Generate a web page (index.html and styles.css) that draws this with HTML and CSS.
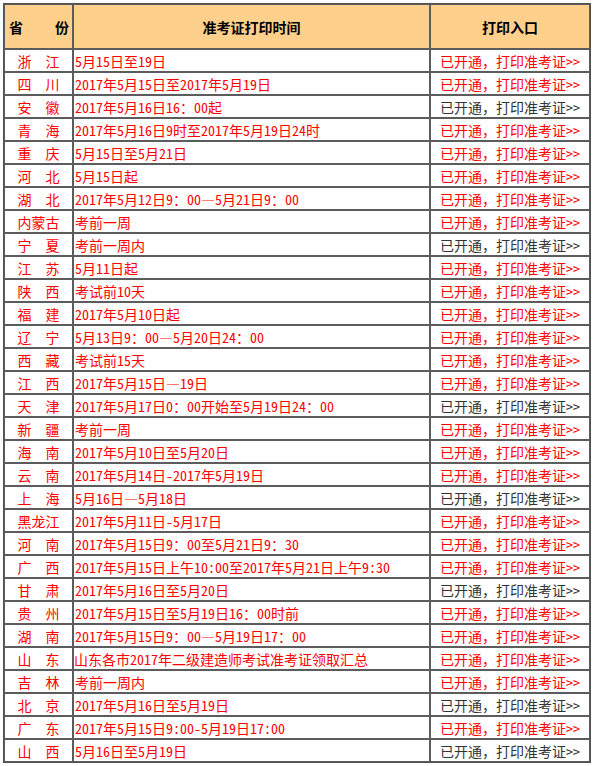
FILE: index.html
```html
<!DOCTYPE html>
<html lang="zh-CN">
<head>
<meta charset="utf-8">
<title>准考证打印时间</title>
<link rel="stylesheet" href="styles.css">
</head>
<body>
<table class="sched">
  <thead>
    <tr class="head-row">
      <th class="c-prov"><span class="prov-head"><span>省</span><span>份</span></span></th>
      <th class="c-time">准考证打印时间</th>
      <th class="c-link">打印入口</th>
    </tr>
  </thead>
  <tbody>
    <tr><td class="c-prov">浙　江</td><td class="c-time">5月15日至19日</td><td class="c-link red">已开通，打印准考证<span class="arr">&gt;&gt;</span></td></tr>
    <tr><td class="c-prov">四　川</td><td class="c-time">2017年5月15日至2017年5月19日</td><td class="c-link red">已开通，打印准考证<span class="arr">&gt;&gt;</span></td></tr>
    <tr><td class="c-prov">安　徽</td><td class="c-time">2017年5月16日16：00起</td><td class="c-link gray">已开通，打印准考证<span class="arr">&gt;&gt;</span></td></tr>
    <tr><td class="c-prov">青　海</td><td class="c-time">2017年5月16日9时至2017年5月19日24时</td><td class="c-link red">已开通，打印准考证<span class="arr">&gt;&gt;</span></td></tr>
    <tr><td class="c-prov">重　庆</td><td class="c-time">5月15日至5月21日</td><td class="c-link red">已开通，打印准考证<span class="arr">&gt;&gt;</span></td></tr>
    <tr><td class="c-prov">河　北</td><td class="c-time">5月15日起</td><td class="c-link red">已开通，打印准考证<span class="arr">&gt;&gt;</span></td></tr>
    <tr><td class="c-prov">湖　北</td><td class="c-time">2017年5月12日9：00—5月21日9：00</td><td class="c-link red">已开通，打印准考证<span class="arr">&gt;&gt;</span></td></tr>
    <tr><td class="c-prov">内蒙古</td><td class="c-time">考前一周</td><td class="c-link red">已开通，打印准考证<span class="arr">&gt;&gt;</span></td></tr>
    <tr><td class="c-prov">宁　夏</td><td class="c-time">考前一周内</td><td class="c-link gray">已开通，打印准考证<span class="arr">&gt;&gt;</span></td></tr>
    <tr><td class="c-prov">江　苏</td><td class="c-time">5月11日起</td><td class="c-link red">已开通，打印准考证<span class="arr">&gt;&gt;</span></td></tr>
    <tr><td class="c-prov">陕　西</td><td class="c-time">考试前10天</td><td class="c-link red">已开通，打印准考证<span class="arr">&gt;&gt;</span></td></tr>
    <tr><td class="c-prov">福　建</td><td class="c-time">2017年5月10日起</td><td class="c-link red">已开通，打印准考证<span class="arr">&gt;&gt;</span></td></tr>
    <tr><td class="c-prov">辽　宁</td><td class="c-time">5月13日9：00—5月20日24：00</td><td class="c-link red">已开通，打印准考证<span class="arr">&gt;&gt;</span></td></tr>
    <tr><td class="c-prov">西　藏</td><td class="c-time">考试前15天</td><td class="c-link red">已开通，打印准考证<span class="arr">&gt;&gt;</span></td></tr>
    <tr><td class="c-prov">江　西</td><td class="c-time">2017年5月15日—19日</td><td class="c-link red">已开通，打印准考证<span class="arr">&gt;&gt;</span></td></tr>
    <tr><td class="c-prov">天　津</td><td class="c-time">2017年5月17日0：00开始至5月19日24：00</td><td class="c-link gray">已开通，打印准考证<span class="arr">&gt;&gt;</span></td></tr>
    <tr><td class="c-prov">新　疆</td><td class="c-time">考前一周</td><td class="c-link red">已开通，打印准考证<span class="arr">&gt;&gt;</span></td></tr>
    <tr><td class="c-prov">海　南</td><td class="c-time">2017年5月10日至5月20日</td><td class="c-link red">已开通，打印准考证<span class="arr">&gt;&gt;</span></td></tr>
    <tr><td class="c-prov">云　南</td><td class="c-time">2017年5月14日-2017年5月19日</td><td class="c-link red">已开通，打印准考证<span class="arr">&gt;&gt;</span></td></tr>
    <tr><td class="c-prov">上　海</td><td class="c-time">5月16日—5月18日</td><td class="c-link gray">已开通，打印准考证<span class="arr">&gt;&gt;</span></td></tr>
    <tr><td class="c-prov">黑龙江</td><td class="c-time">2017年5月11日-5月17日</td><td class="c-link red">已开通，打印准考证<span class="arr">&gt;&gt;</span></td></tr>
    <tr><td class="c-prov">河　南</td><td class="c-time">2017年5月15日9：00至5月21日9：30</td><td class="c-link red">已开通，打印准考证<span class="arr">&gt;&gt;</span></td></tr>
    <tr><td class="c-prov">广　西</td><td class="c-time">2017年5月15日上午10:00至2017年5月21日上午9:30</td><td class="c-link red">已开通，打印准考证<span class="arr">&gt;&gt;</span></td></tr>
    <tr><td class="c-prov">甘　肃</td><td class="c-time">2017年5月16日至5月20日</td><td class="c-link gray">已开通，打印准考证<span class="arr">&gt;&gt;</span></td></tr>
    <tr><td class="c-prov">贵　州</td><td class="c-time">2017年5月15日至5月19日16：00时前</td><td class="c-link red">已开通，打印准考证<span class="arr">&gt;&gt;</span></td></tr>
    <tr><td class="c-prov">湖　南</td><td class="c-time">2017年5月15日9：00—5月19日17：00</td><td class="c-link red">已开通，打印准考证<span class="arr">&gt;&gt;</span></td></tr>
    <tr><td class="c-prov">山　东</td><td class="c-time tight">山东各市2017年二级建造师考试准考证领取汇总</td><td class="c-link red">已开通，打印准考证<span class="arr">&gt;&gt;</span></td></tr>
    <tr><td class="c-prov">吉　林</td><td class="c-time">考前一周内</td><td class="c-link red">已开通，打印准考证<span class="arr">&gt;&gt;</span></td></tr>
    <tr><td class="c-prov">北　京</td><td class="c-time">2017年5月16日至5月19日</td><td class="c-link gray">已开通，打印准考证<span class="arr">&gt;&gt;</span></td></tr>
    <tr><td class="c-prov">广　东</td><td class="c-time">2017年5月15日9:00-5月19日17:00</td><td class="c-link red">已开通，打印准考证<span class="arr">&gt;&gt;</span></td></tr>
    <tr><td class="c-prov">山　西</td><td class="c-time">5月16日至5月19日</td><td class="c-link gray">已开通，打印准考证<span class="arr">&gt;&gt;</span></td></tr>
  </tbody>
</table>
</body>
</html>
```
FILE: styles.css
```css
html, body {
  margin: 0;
  padding: 0;
  background: #ffffff;
}

body {
  padding: 3px 0 0 3px;
  font-family: "Noto Sans CJK SC", "Noto Sans", sans-serif;
  font-size: 14px;
  line-height: 16px;
}

.sched {
  width: 588px;
  table-layout: fixed;
  border-collapse: separate;
  border-spacing: 0;
  border: 1px solid #505050;
}

.sched th,
.sched td {
  box-sizing: border-box;
  border: 1px solid #5c5c5c;
  padding: 0;
  white-space: nowrap;
  overflow: hidden;
}

.sched td {
  height: 23px;
  color: #ff0000;
}

.head-row th {
  height: 45px;
  background: #ffd08b;
  color: #000000;
  font-weight: bold;
  text-align: center;
}

.c-prov {
  width: 69px;
  text-align: center;
}

.c-time {
  width: 357px;
}

.sched td.c-time {
  text-align: left;
  padding-left: 1px;
  font-feature-settings: "hwid";
}

.sched td.tight {
  padding-left: 0;
}

.c-link {
  width: 160px;
  text-align: center;
}

.arr {
  font-feature-settings: "hwid";
}

.prov-head {
  display: flex;
  justify-content: space-between;
  padding: 0 3px 0 4px;
}

.sched td.red {
  color: #ff0000;
}

.sched td.gray {
  color: #333333;
}
```
